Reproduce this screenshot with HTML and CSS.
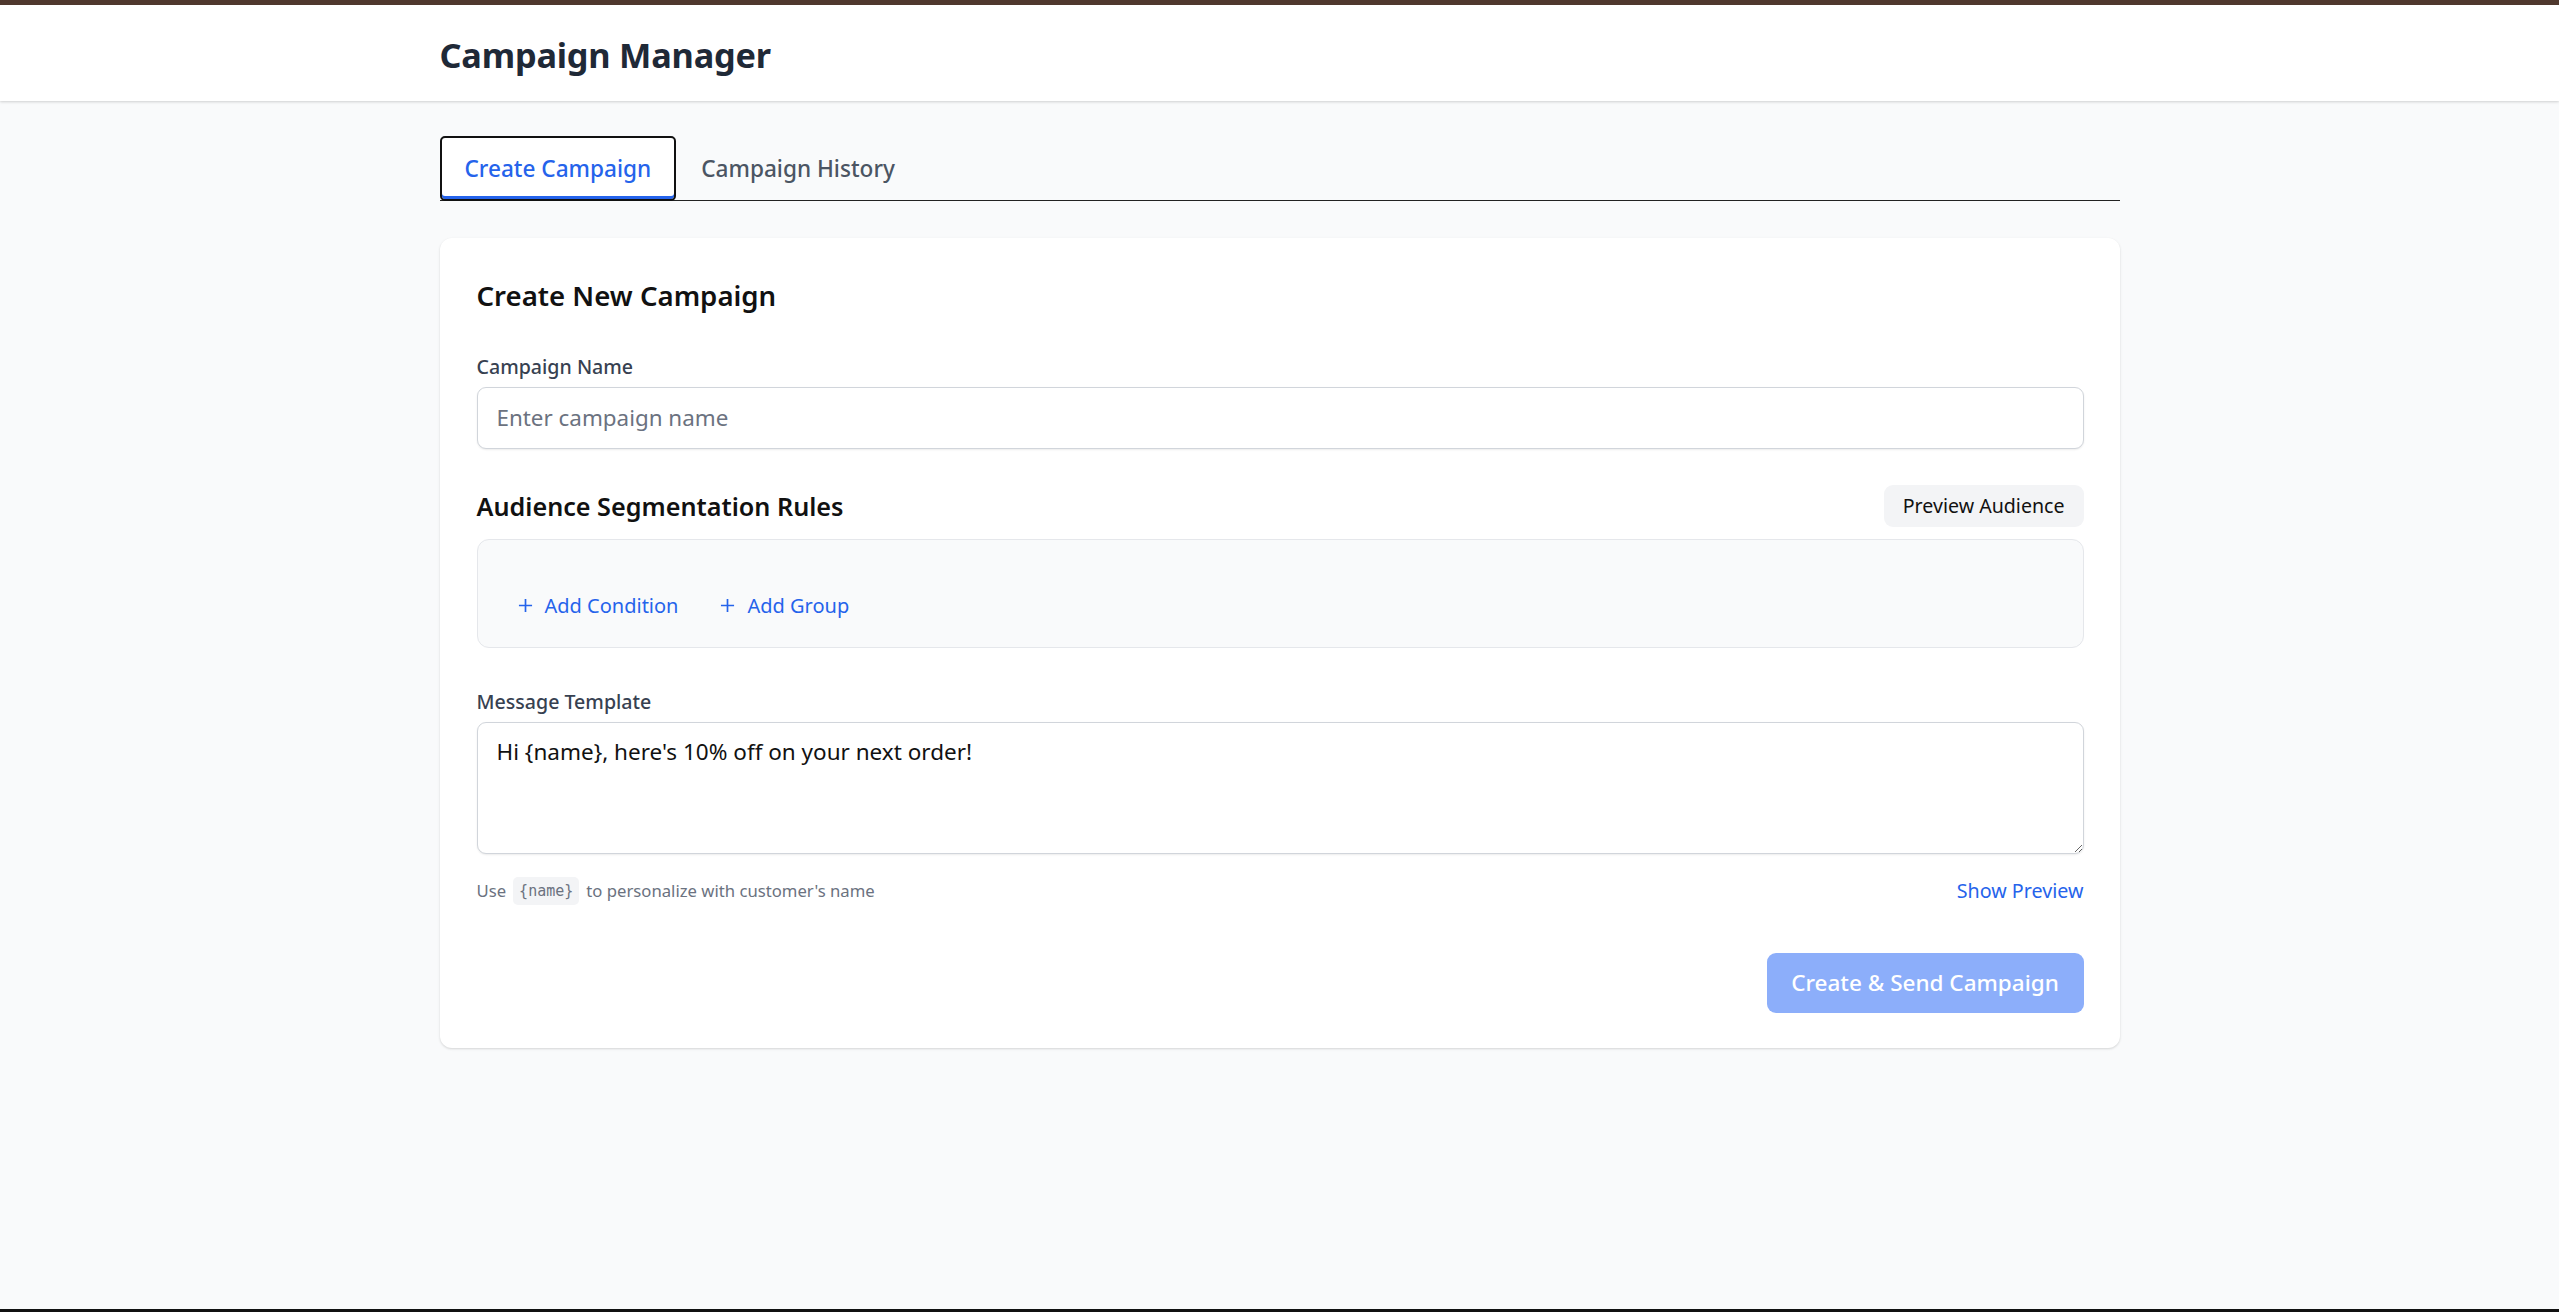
FILE: index.html
```html
<!DOCTYPE html>
<html lang="en">
<head>
<meta charset="utf-8">
<title>Campaign Manager</title>
<link rel="stylesheet" href="styles.css">
</head>
<body>
<header class="topbar">
  <div class="container topbar-inner">
    <h1 class="app-title">Campaign Manager</h1>
  </div>
</header>
<main class="container main">
  <nav class="tabs">
    <button class="tab tab-active">Create Campaign</button>
    <button class="tab">Campaign History</button>
  </nav>
  <section class="card">
    <h2 class="card-title">Create New Campaign</h2>
    <div class="field">
      <label class="label" for="cname">Campaign Name</label>
      <input id="cname" class="input" type="text" placeholder="Enter campaign name">
    </div>
    <div class="section">
      <div class="section-head">
        <h3 class="section-title">Audience Segmentation Rules</h3>
        <button class="btn-light">Preview Audience</button>
      </div>
      <div class="rules">
        <div class="rules-actions">
          <button class="link-btn"><svg class="plus" viewBox="0 0 16 16" width="15" height="15"><path d="M8 1v14M1 8h14" stroke="currentColor" stroke-width="1.8" fill="none"/></svg>Add Condition</button>
          <button class="link-btn"><svg class="plus" viewBox="0 0 16 16" width="15" height="15"><path d="M8 1v14M1 8h14" stroke="currentColor" stroke-width="1.8" fill="none"/></svg>Add Group</button>
        </div>
      </div>
    </div>
    <div class="field field-msg">
      <label class="label" for="msg">Message Template</label>
      <textarea id="msg" class="textarea" rows="3">Hi {name}, here's 10% off on your next order!</textarea>
      <div class="helper-row">
        <p class="helper">Use <code class="chip">{name}</code> to personalize with customer's name</p>
        <button class="link-btn small">Show Preview</button>
      </div>
    </div>
    <div class="actions">
      <button class="btn-primary" disabled>Create &amp; Send Campaign</button>
    </div>
  </section>
</main>
</body>
</html>
```

FILE: styles.css
```css
* { box-sizing: border-box; }
html, body { margin: 0; padding: 0; }
body {
  min-height: 100vh;
  background: #f9fafb;
  font-family: "Noto Sans", "Open Sans", sans-serif;
  color: #111827;
  border-top: 5px solid #4f382e;
  border-bottom: 3px solid #111;
}
button, input, textarea { font-family: inherit; }
.container {
  max-width: 1728px;
  margin: 0 auto;
  padding: 0 24px;
}
.topbar {
  background: #fff;
  box-shadow: 0 1px 3px rgba(0,0,0,0.12), 0 1px 2px rgba(0,0,0,0.06);
}
.topbar-inner {
  height: 96px;
  display: flex;
  align-items: center;
  padding-top: 3px;
}
.app-title {
  margin: 0;
  font-size: 34.3px;
  font-weight: 700;
  color: #1f2937;
  letter-spacing: -0.2px;
}
.main { padding-top: 35px; }
.tabs {
  display: flex;
  align-items: flex-end;
  border-bottom: 1.5px solid #222;
}
.tab {
  height: 65px;
  padding: 0 23px;
  margin-bottom: -1.5px;
  background: transparent;
  border: 2px solid transparent;
  font-size: 22.6px;
  font-weight: 500;
  color: #4b5563;
  cursor: pointer;
}
.tab-active {
  background: #fff;
  color: #2563eb;
  border: 2px solid #111;
  border-radius: 5px;
  box-shadow: inset 0 -3px 0 #2563eb;
}
.card {
  margin-top: 37px;
  background: #fff;
  border-radius: 12px;
  box-shadow: 0 1px 3px rgba(0,0,0,0.1), 0 1px 2px rgba(0,0,0,0.06);
  padding: 36px 36px 35px 37px;
}
.card-title {
  margin: 0 0 36px;
  font-size: 27.6px;
  line-height: 42px;
  font-weight: 600;
  color: #111;
}
.field { display: flex; flex-direction: column; }
.label {
  font-size: 19.6px;
  line-height: 30px;
  font-weight: 500;
  color: #374151;
  margin-bottom: 5px;
}
.input {
  height: 62px;
  border: 1.5px solid #d1d5db;
  border-radius: 9px;
  padding: 0 19px;
  font-size: 22.4px;
  color: #111;
  box-shadow: 0 1px 2px rgba(0,0,0,0.08);
  outline: none;
}
.input::placeholder { color: #6b7280; }
.section { margin-top: 36px; }
.section-head {
  display: flex;
  align-items: center;
  justify-content: space-between;
}
.section-title {
  margin: 0;
  font-size: 25.2px;
  font-weight: 600;
  color: #111;
}
.btn-light {
  height: 42px;
  padding: 0 19px;
  background: #f3f4f6;
  border: none;
  border-radius: 9px;
  font-size: 19.6px;
  color: #111;
  cursor: pointer;
}
.rules {
  margin-top: 12px;
  height: 109px;
  background: #f9fafb;
  border: 1.5px solid #e5e7eb;
  border-radius: 12px;
  padding: 0 36px 26px 40px;
  display: flex;
  align-items: flex-end;
}
.rules-actions { display: flex; gap: 42px; }
.link-btn {
  display: inline-flex;
  align-items: center;
  gap: 12px;
  background: none;
  border: none;
  padding: 0;
  font-size: 20px;
  line-height: 30px;
  color: #2563eb;
  cursor: pointer;
}
.link-btn.small { font-size: 19.7px; }
.plus { display: block; }
.field-msg { margin-top: 39px; }
.textarea {
  height: 132px;
  border: 1.5px solid #d1d5db;
  border-radius: 9px;
  padding: 11px 19px;
  font-size: 22.5px;
  line-height: 36px;
  color: #111;
  box-shadow: 0 1px 2px rgba(0,0,0,0.08);
  resize: vertical;
  outline: none;
}
.helper-row {
  margin-top: 22px;
  display: flex;
  align-items: center;
  justify-content: space-between;
}
.helper {
  margin: 0;
  font-size: 16.7px;
  color: #6b7280;
  display: flex;
  align-items: center;
}
.chip {
  display: inline-block;
  margin: 0 7px;
  padding: 2px 6px;
  background: #f3f4f6;
  border-radius: 5px;
  font-family: "DejaVu Sans Mono", "Liberation Mono", monospace;
  font-size: 15px;
  line-height: 24px;
  color: #6b7280;
}
.actions {
  margin-top: 47px;
  display: flex;
  justify-content: flex-end;
}
.btn-primary {
  width: 317px;
  height: 60px;
  background: #8caefa;
  color: #fff;
  border: none;
  border-radius: 9px;
  font-size: 22.5px;
  font-weight: 500;
}
```
